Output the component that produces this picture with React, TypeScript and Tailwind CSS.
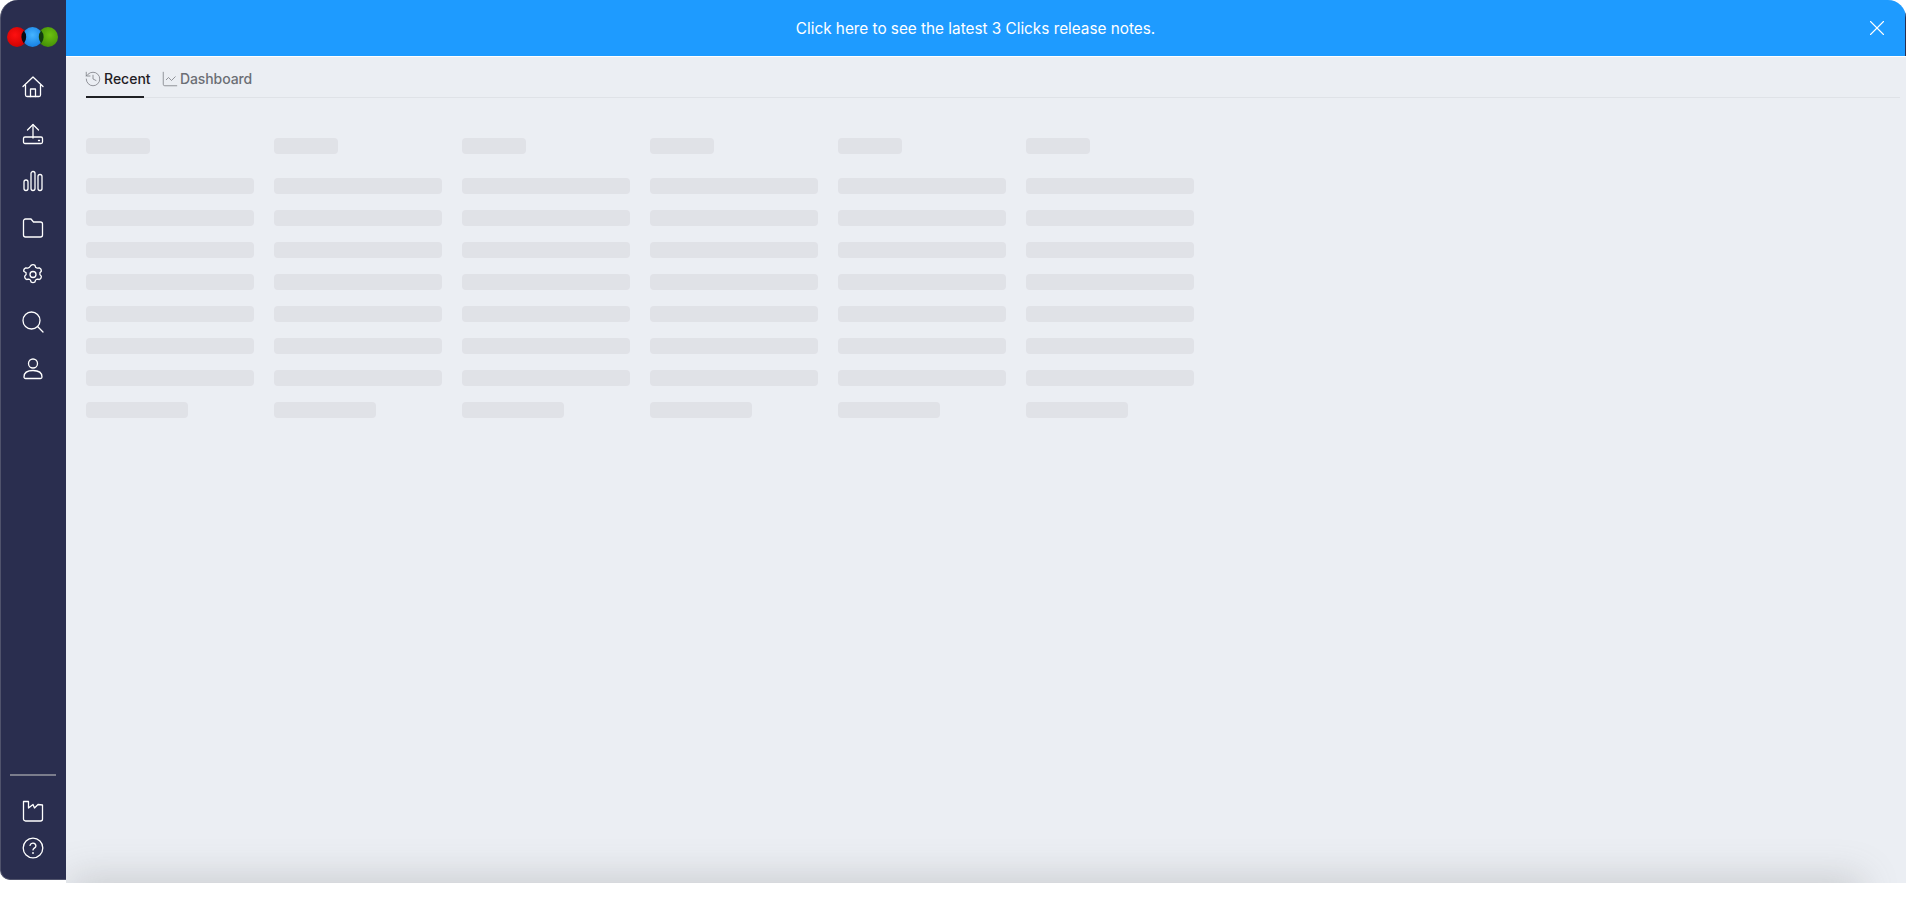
import { History, ChartLine, X } from "lucide-react";

const columns = [0, 1, 2, 3, 4, 5];
const rows = [0, 1, 2, 3, 4, 5, 6];

function Icon({ children }: { children: React.ReactNode }) {
  return (
    <svg width="24" height="24" viewBox="0 0 24 24" fill="none" stroke="white" strokeWidth="1.3" strokeLinecap="round" strokeLinejoin="round">
      {children}
    </svg>
  );
}

function Logo() {
  return (
    <svg width="52" height="22" viewBox="0 0 52 22" className="-ml-[2px]">
      <defs>
        <radialGradient id="red" cx="0.4" cy="0.4" r="0.7">
          <stop offset="0" stopColor="#ff1010" />
          <stop offset="1" stopColor="#c80000" />
        </radialGradient>
        <radialGradient id="blue" cx="0.5" cy="0.4" r="0.7">
          <stop offset="0" stopColor="#45b4ff" />
          <stop offset="1" stopColor="#0f78e0" />
        </radialGradient>
        <radialGradient id="green" cx="0.6" cy="0.4" r="0.7">
          <stop offset="0" stopColor="#6cc010" />
          <stop offset="1" stopColor="#3f8a06" />
        </radialGradient>
      </defs>
      <circle cx="11" cy="11" r="10" fill="url(#red)" />
      <circle cx="42" cy="11" r="10" fill="url(#green)" />
      <circle cx="26.5" cy="11" r="10" fill="url(#blue)" />
      <path d="M17.8 4.5a10 10 0 0 1 0 13a10 10 0 0 1 0-13z" fill="#0a0a14" />
      <path d="M35.2 4.5a10 10 0 0 1 0 13a10 10 0 0 1 0-13z" fill="#123c10" />
    </svg>
  );
}

const topIcons = [
  // home
  <Icon key="home">
    <path d="M2 11.5 12 2l10 9.500" />
    <path d="M4.5 10v10a1.5 1.5 0 0 0 1.5 1.500h12a1.5 1.5 0 0 0 1.5-1.500V10" />
    <path d="M9.5 21.5V14h5v7.500" />
  </Icon>,
  // upload tray
  <Icon key="upload">
    <path d="M12 16V3" />
    <path d="M6.5 8 12 2.500 17.500 8" />
    <rect x="2.5" y="15" width="19" height="6.500" rx="1.500" />
    <path d="M17.5 18.500h1" />
  </Icon>,
  // bars
  <Icon key="bars">
    <rect x="3" y="11" width="4" height="10.500" rx="2" />
    <rect x="10" y="2.500" width="4" height="19" rx="2" />
    <rect x="17" y="5.500" width="4" height="16" rx="2" />
  </Icon>,
  // folder
  <Icon key="folder">
    <path d="M2.500 5v14a2 2 0 0 0 2 2h15a2 2 0 0 0 2-2V8a2 2 0 0 0-2-2h-7l-2.500-3H4.500a2 2 0 0 0-2 2z" />
  </Icon>,
  // gear, six rounded teeth
  <Icon key="gear">
    <path d="M10 2.400q2-1.400 4 0l.6 1.900q.9.3 1.700.9l2-.4q2.200.9 2 3.400l-1.400 1.500q.1 1 0 1.900l1.400 1.500q.2 2.500-2 3.400l-2-.4q-.8.6-1.700.9l-.6 1.900q-2 1.400-4 0l-.6-1.900q-.9-.3-1.700-.9l-2 .4q-2.200-.9-2-3.400l1.400-1.500q-.1-1 0-1.900L2.700 8.200q-.2-2.500 2-3.400l2 .4q.8-.6 1.700-.9z" />
    <circle cx="12" cy="11.500" r="3" />
  </Icon>,
  // search
  <Icon key="search">
    <circle cx="10.500" cy="10.500" r="8.500" />
    <path d="m16.800 16.800 5.200 5.200" />
  </Icon>,
  // user
  <Icon key="user">
    <circle cx="12" cy="6.500" r="4.500" />
    <path d="M3 20c0-4 3.500-6.500 9-6.500s9 2.500 9 6.500a1.500 1.500 0 0 1-1.500 1.500h-15A1.500 1.500 0 0 1 3 20z" />
  </Icon>,
];

export default function App() {
  return (
    <div className="min-h-screen bg-white font-['Inter',sans-serif]">
      <div className="flex h-[883px]">
        {/* Sidebar */}
        <aside className="flex h-[880px] w-[66px] shrink-0 flex-col items-center overflow-hidden rounded-tl-[18px] rounded-bl-[10px] border-b border-l border-[#50536c] bg-[#2a2e4f] pt-[26px] pb-[19px] pr-[2px]">
          <Logo />
          <nav className="mt-[27px] flex flex-col items-center gap-[23px]">
            {topIcons}
          </nav>
          <div className="mt-auto h-[2px] w-[46px] bg-[#7b7d8c]" />
          <div className="mt-[23px] flex flex-col items-center gap-[13px]">
            <Icon>
              <path d="M2.500 2.500h5v6.500l4.500-3.500 1.500 3.500 3.500-3.500 4.500.5v14a2 2 0 0 1-2 2h-15a2 2 0 0 1-2-2V2.500z" />
            </Icon>
            <Icon>
              <circle cx="12" cy="12" r="9.800" />
              <path d="M9 9.300a3 3 0 0 1 5.900.6c0 2-2.900 2.400-2.900 4" />
              <path d="M12 17h.01" strokeWidth="1.800" />
            </Icon>
          </div>
        </aside>

        {/* Main */}
        <main className="relative flex min-w-0 flex-1 flex-col overflow-hidden rounded-tr-[18px] bg-[#ebeef3]">
          <div className="relative flex h-[56px] shrink-0 items-center justify-center border-r border-[#2a2e4f] bg-[#1e9bff] pt-[2px] pr-[20px] text-[15.3px] text-white">
            Click here to see the latest 3 Clicks release notes.
            <X className="absolute right-[15px] top-[15px] h-[26px] w-[26px]" strokeWidth={1} />
          </div>
          <div className="h-px shrink-0 bg-white" />

          <div className="mx-[20px] mr-[6px] mt-[8px] flex h-[33px] shrink-0 border-b border-[#dfe2e7]">
            <div className="flex h-[33px] w-[58px] items-center gap-[2px] whitespace-nowrap border-b-2 border-[#1f2024] pb-[4px] text-[14px] font-medium text-[#1f2024]">
              <History className="-ml-[2px] h-[18px] w-[18px] shrink-0 text-[#74767c]" strokeWidth={1} />
              Recent
            </div>
            <div className="ml-[17px] flex h-[32px] items-center gap-[1px] whitespace-nowrap pb-[5px] text-[14px] font-medium tracking-[-0.1px] text-[#6b6e75]">
              <ChartLine className="h-[18px] w-[18px] shrink-0 text-[#74767c]" strokeWidth={1} />
              Dashboard
            </div>
          </div>

          <div className="ml-[20px] mt-[40px] flex gap-[20px]">
            {columns.map((c) => (
              <div key={c} className="flex w-[168px] flex-col gap-[16px]">
                <div className="mb-[8px] h-[16px] w-[64px] rounded bg-[#e0e2e7]" />
                {rows.map((r) => (
                  <div key={r} className="h-[16px] w-full rounded bg-[#e0e2e7]" />
                ))}
                <div className="h-[16px] w-[102px] rounded bg-[#e0e2e7]" />
              </div>
            ))}
          </div>

          {/* soft shadow along the bottom edge */}
          <div className="absolute bottom-[-16px] left-[20px] right-[60px] h-[6px] shadow-[0_0_36px_16px_rgba(110,110,110,0.26)]" />
        </main>
      </div>
    </div>
  );
}
